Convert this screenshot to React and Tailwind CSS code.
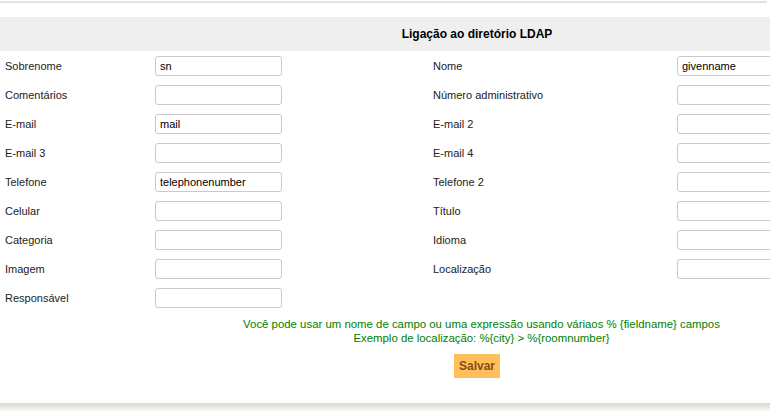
import React from "react";

const rows = [
  ["Sobrenome", "sn", "Nome", "givenname"],
  ["Comentários", "", "Número administrativo", ""],
  ["E-mail", "mail", "E-mail 2", ""],
  ["E-mail 3", "", "E-mail 4", ""],
  ["Telefone", "telephonenumber", "Telefone 2", ""],
  ["Celular", "", "Título", ""],
  ["Categoria", "", "Idioma", ""],
  ["Imagem", "", "Localização", ""],
  ["Responsável", "", null, null],
];

function Field({ value }) {
  return (
    <input
      readOnly
      value={value}
      className="h-[20px] w-[127px] rounded-[3px] border border-[#c9c9c9] bg-white px-[4px] text-[11px] text-black outline-none"
    />
  );
}

export default function App() {
  return (
    <div
      className="w-[770px] h-[411px] overflow-hidden bg-[#f6f6f1] text-[#222]"
      style={{ fontFamily: '"Liberation Sans", Arial, sans-serif' }}
    >
      <div className="bg-white h-[403px] overflow-hidden">
        <div className="h-[3px] w-[767px] border-b-2 border-[#e2e2e2]" />
        <div className="w-[954px] mt-[14px]">
          <div className="h-[34px] bg-[#efefef] flex items-center justify-center text-[12px] font-bold text-black">
            Ligação ao diretório LDAP
          </div>
          {rows.map((r, i) => (
            <div key={i} className="grid grid-cols-[150px_278px_244px_282px] h-[29px] items-center text-[11px]">
              <div className="pl-[5px] pt-[1px]">{r[0]}</div>
              <div className="pl-[5px]"><Field value={r[1]} /></div>
              <div className="pl-[5px] pt-[1px]">{r[2]}</div>
              <div className="pl-[5px]">{r[3] !== null && <Field value={r[3]} />}</div>
            </div>
          ))}
          <div className="w-[963px] pt-[5px] text-center text-[11.4px] leading-[14px] text-[#008000]">
            <div>Você pode usar um nome de campo ou uma expressão usando váriaos % {"{fieldname}"} campos</div>
            <div>Exemplo de localização: %{"{city}"} &gt; %{"{roomnumber}"}</div>
          </div>
          <div className="flex justify-center pt-[9px]">
            <button className="h-[24px] px-[5px] bg-[#ffc05c] text-[12px] font-bold text-[#8b4a14]">Salvar</button>
          </div>
        </div>
      </div>
      <div className="h-[6px] bg-gradient-to-b from-[#d6d6d6] to-[#efefea]" />
    </div>
  );
}
